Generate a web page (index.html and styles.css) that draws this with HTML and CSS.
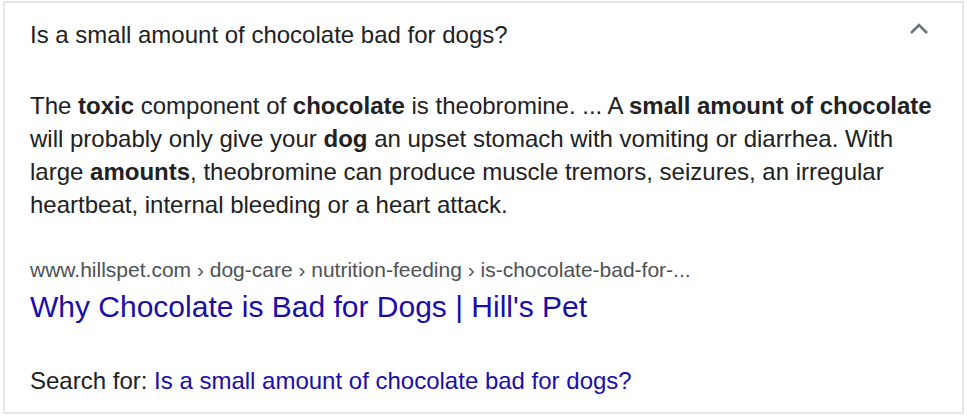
FILE: index.html
```html
<!DOCTYPE html>
<html lang="en">
<head>
  <meta charset="UTF-8">
  <meta name="viewport" content="width=device-width, initial-scale=1.0">
  <title>Is a small amount of chocolate bad for dogs?</title>
  <link rel="stylesheet" href="styles.css">
</head>
<body>
  <div class="answer-card">
    <div class="question">
      <span>Is a small amount of chocolate bad for dogs?</span>
      <svg class="chevron" width="24" height="24" viewBox="0 0 24 24">
        <path d="M4 15 L12 7 L20 15" fill="none" stroke="#70757a" stroke-width="2.6"/>
      </svg>
    </div>
    <div class="snippet">
      The <b>toxic</b> component of <b>chocolate</b> is theobromine. ... A <b>small amount of chocolate</b><br>
      will probably only give your <b>dog</b> an upset stomach with vomiting or diarrhea. With<br>
      large <b>amounts</b>, theobromine can produce muscle tremors, seizures, an irregular<br>
      heartbeat, internal bleeding or a heart attack.
    </div>
    <div class="source">
      <div class="crumbs">www.hillspet.com › dog-care › nutrition-feeding › is-chocolate-bad-for-...</div>
      <a class="title" href="#">Why Chocolate is Bad for Dogs | Hill's Pet</a>
    </div>
    <div class="search-for">
      Search for: <a href="#">Is a small amount of chocolate bad for dogs?</a>
    </div>
  </div>
</body>
</html>
```

FILE: styles.css
```css
body {
  margin: 0;
  padding: 1px 3px 2px 3px;
  background-color: #fff;
  font-family: "Liberation Sans", Arial, sans-serif;
  color: #202124;
}

.answer-card {
  border: 2px solid #e6e6e6;
  height: 413px;
  box-sizing: border-box;
  padding: 0 20px 0 25px;
}

.question {
  display: flex;
  justify-content: space-between;
  align-items: center;
  height: 64px;
  font-size: 24px;
}

.chevron {
  margin-right: 11px;
  margin-bottom: 10px;
}

.snippet {
  margin-top: 22px;
  font-size: 24px;
  line-height: 33px;
  white-space: nowrap;
}

.snippet b {
  font-weight: bold;
}

.source {
  margin-top: 37px;
}

.crumbs {
  font-size: 21px;
  line-height: 24px;
  color: #4d5156;
}

.title {
  display: block;
  margin-top: 8px;
  font-size: 30px;
  line-height: 34px;
  color: #1a0dab;
  text-decoration: none;
}

.search-for {
  margin-top: 43px;
  font-size: 24px;
  line-height: 28px;
}

.search-for a {
  color: #1a0dab;
  text-decoration: none;
}
```
